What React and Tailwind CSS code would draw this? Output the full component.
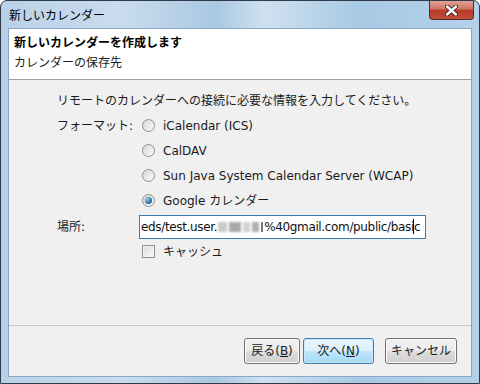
import React from "react";

const jp = { fontFamily: '"DejaVu Sans", "Noto Sans CJK JP", sans-serif' };

function Radio({ checked }) {
  return (
    <span className="relative flex h-[13px] w-[13px] shrink-0 items-center justify-center rounded-full border border-[#8e8f8f] bg-[linear-gradient(135deg,#d8d8d8,#fbfbfb)]">
      {checked && (
        <span className="h-[7px] w-[7px] rounded-full bg-[radial-gradient(circle_at_35%_35%,#8fd0f6,#1f5e8e_70%)]" />
      )}
    </span>
  );
}

function Btn({ children, focused }) {
  return (
    <button
      className={
        "flex h-[26px] w-full items-center justify-center rounded-[3px] border text-[12px] text-[#1a1a1a] " +
        (focused
          ? "border-[#3c7fb1] bg-[linear-gradient(#eaf6fd_0%,#d9f0fc_50%,#bee6fd_51%,#a7d9f5_100%)] shadow-[inset_0_0_0_1px_#c8e8f9]"
          : "border-[#707070] bg-[linear-gradient(#f2f2f2_0%,#ebebeb_50%,#dddddd_51%,#cfcfcf_100%)] shadow-[inset_0_0_0_1px_#fcfcfc]")
      }
      style={jp}
    >
      {children}
    </button>
  );
}

export default function App() {
  return (
    <div
      className="flex h-[384px] w-[480px] flex-col rounded-t-[7px] border border-[#2f3b48] bg-[linear-gradient(90deg,#b9d1e8_0%,#c9dcee_25%,#a9c8e2_45%,#cfe1f0_55%,#a8c9e4_75%,#b4d1ea_100%)] px-[7px] pb-[6px]"
      style={jp}
    >
      <div className="flex h-[27px] items-start justify-between">
        <div className="pt-[7px] pl-[1px] text-[12px] leading-[16px] text-black">新しいカレンダー</div>
        <div className="-mr-[2px] flex h-[19px] w-[45px] items-center justify-center rounded-b-[4px] border border-t-0 border-[#5a2a2a] bg-[linear-gradient(#e0a197_0%,#cf7666_45%,#b83a28_50%,#c24e3a_100%)]">
          <svg width="13" height="11" viewBox="0 0 13 11">
            <path d="M2 1.5 L11 9.5 M11 1.5 L2 9.5" stroke="#3b1a14" strokeWidth="4.2" strokeLinecap="round" />
            <path d="M2 1.5 L11 9.5 M11 1.5 L2 9.5" stroke="#ffffff" strokeWidth="2.4" strokeLinecap="round" />
          </svg>
        </div>
      </div>
      <div className="flex flex-1 flex-col border border-[#8aa6c2] bg-[#f0f0f0]">
        <div className="flex h-[51px] flex-col border-b border-[#a0a0a0] bg-white pl-[5px] pt-[6px]">
          <div className="text-[12px] font-bold leading-[16px] text-black">新しいカレンダーを作成します</div>
          <div className="mt-[4px] text-[12px] leading-[16px] text-[#1a1a1a]">カレンダーの保存先</div>
        </div>
        <div className="flex flex-1 flex-col pl-[48px] pt-[8px] text-[12px] text-[#1a1a1a]">
          <div className="flex h-[25px] items-center">リモートのカレンダーへの接続に必要な情報を入力してください。</div>
          <div className="flex">
            <div className="flex h-[25px] w-[82px] shrink-0 items-center">フォーマット:</div>
            <div className="flex flex-col">
              {[
                ["iCalendar (ICS)", false],
                ["CalDAV", false],
                ["Sun Java System Calendar Server (WCAP)", false],
                ["Google カレンダー", true],
              ].map(([t, c]) => (
                <div key={t} className="flex h-[25px] items-center gap-[8px] pl-[3px]">
                  <Radio checked={c} />
                  <span>{t}</span>
                </div>
              ))}
            </div>
          </div>
          <div className="mt-[2px] flex items-center">
            <div className="w-[82px] shrink-0">場所:</div>
            <div className="flex h-[24px] w-[287px] items-center overflow-hidden whitespace-nowrap border border-[#3d7bad] bg-white pl-[1px] text-[12px] tracking-[-0.35px] text-[#111]">
              <span>eds/test.user.</span>
              <span className="mx-[1px] inline-flex h-[10px] w-[45px] shrink-0 gap-[2px]">
                <span className="h-full w-[10px] bg-[#c9c9c9] blur-[1px]" />
                <span className="h-full w-[12px] bg-[#a8a8a8] blur-[1px]" />
                <span className="h-full w-[8px] bg-[#d2d2d2] blur-[1px]" />
                <span className="h-full w-[8px] bg-[#b0b0b0] blur-[1px]" />
                <span className="h-full w-[2px] bg-[#777]" />
              </span>
              <span>%40gmail.com/public/basi</span>
              <span className="relative">
                c<span className="absolute -left-[1px] top-[1px] h-[15px] w-[1px] bg-black" />
              </span>
            </div>
          </div>
          <div className="flex h-[25px] items-center gap-[8px] pl-[85px]">
            <span className="h-[13px] w-[13px] border border-[#8e8f8f] bg-[linear-gradient(135deg,#dcdcdc,#fbfbfb)] shadow-[inset_0_0_0_1px_#f4f4f4]" />
            <span>キャッシュ</span>
          </div>
        </div>
        <div className="flex h-[51px] items-center justify-end border-t border-[#c8c8c8] pr-[14px]">
          <div className="flex items-center">
            <div className="w-[56px]">
              <Btn>
                <span>
                  戻る(<span className="underline">B</span>)
                </span>
              </Btn>
            </div>
            <div className="ml-[3px] w-[71px]">
              <Btn focused>
                <span>
                  次へ(<span className="underline">N</span>)
                </span>
              </Btn>
            </div>
            <div className="ml-[11px] w-[72px]">
              <Btn>キャンセル</Btn>
            </div>
          </div>
        </div>
      </div>
    </div>
  );
}
